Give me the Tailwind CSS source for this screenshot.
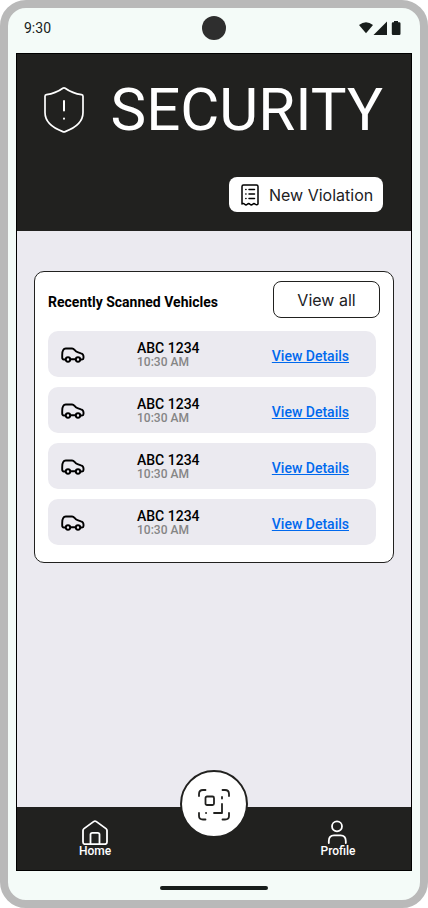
<!DOCTYPE html>
<html lang="en">
<head>
<meta charset="utf-8">
<meta name="viewport" content="width=device-width, initial-scale=1">
<title>Security</title>
<script src="https://cdn.jsdelivr.net/npm/@tailwindcss/browser@4"></script>
</head>
<body class="bg-white font-[Roboto,sans-serif] text-black">
<svg class="hidden" aria-hidden="true">
  <symbol id="car" viewBox="0 0 24 16">
    <g fill="none" stroke="#000" stroke-width="1.900" stroke-linejoin="round" stroke-linecap="round">
      <path d="M4 12.500H2.800Q1.200 12.500 1.200 10.500V8Q1.200 4.500 2.200 3Q3 1.500 4.800 1.500H11Q12.500 1.500 13.500 2.800Q14.700 4.600 16.500 5.200L20 6.300Q22.500 7 22.500 9.500V11Q22.500 12.500 21 12.500H19.500M9.500 12.300H14.500"/>
      <circle cx="7" cy="12.500" r="2.200"/><circle cx="17" cy="12.500" r="2.200"/>
    </g>
  </symbol>
</svg>
<div class="flex min-h-screen flex-col rounded-[26px] border-8 border-[#b9b9b9] bg-[#f4fbf8] px-2">
  <header class="relative flex h-[45px] items-center justify-between px-2 pb-[6px]">
    <time class="text-sm text-[#171d1b]">9:30</time>
    <span class="absolute top-2 left-1/2 size-6 -translate-x-1/2 rounded-full bg-[#2e2e2e]"></span>
    <svg class="mr-[2px] h-4 w-11" viewBox="0 0 44 16" fill="#171d1b" aria-label="Wi-Fi, signal and battery">
      <path d="M1 5Q8 -0.500 15 5L8 13.300Z"/>
      <path d="M15.500 15L29 1.500V15Z"/>
      <path d="M36 2.300V1H40V2.300H41.300Q42.500 2.300 42.500 3.500V13.800Q42.500 15 41.300 15H35Q33.800 15 33.800 13.800V3.500Q33.800 2.300 35 2.300Z"/>
    </svg>
  </header>
  <div class="flex grow flex-col border border-black bg-[#ebeaf0]">
    <section class="flex h-[177px] flex-col justify-between bg-[#21211f] px-7 pt-[26px] pb-[19px] pl-[27px]">
      <div class="flex items-center justify-between">
        <svg class="h-[46px] w-10" viewBox="0 0 40 46" fill="none" stroke="#fff" stroke-width="1.700" stroke-linejoin="round" stroke-linecap="round" aria-hidden="true">
          <path d="M18.800 1.300Q20 0.500 21.200 1.300Q28.500 6.600 37.500 7.600Q39 7.800 39 9.300V25.500Q39 38 21.200 44.600Q20 45.100 18.800 44.600Q1 38 1 25.500V9.300Q1 7.800 2.500 7.600Q11.500 6.600 18.800 1.300Z"/>
          <path d="M20 14V23.500M20 31.500V31.700" stroke-width="2"/>
        </svg>
        <h1 class="text-6xl leading-[60px] text-white">SECURITY</h1>
      </div>
      <button class="flex h-[35px] w-[154px] items-center gap-[10px] self-end rounded-lg bg-white pl-3 font-[Inter,sans-serif] text-base font-normal whitespace-nowrap text-[#21211f]">
        <svg class="h-[22px] w-[18px] shrink-0" viewBox="0 0 18 22" fill="none" stroke="#000" stroke-width="1.500" stroke-linejoin="round" stroke-linecap="round" aria-hidden="true">
          <path d="M1 20V2.500Q1 1 2.500 1H15.500Q17 1 17 2.500V20Q15.700 21.500 14.300 20.200Q13 19 11.700 20.200Q10.300 21.500 9 20.200Q7.700 19 6.300 20.200Q5 21.500 3.700 20.200Q2.300 19 1 20Z"/>
          <path d="M8 5.500H13.500M8 10H13.500M8 14.500H13.500M4.800 5.500H5M4.800 10H5M4.800 14.500H5"/>
        </svg>
        New Violation
      </button>
    </section>
    <main class="px-[17px] pt-10">
      <section class="rounded-[10px] border border-[#21211f] bg-white px-[13px] pt-[9px] pb-[17px]">
        <div class="flex items-center justify-between">
          <h2 class="pt-1 text-sm font-bold">Recently Scanned Vehicles</h2>
          <button class="h-[37px] w-[107px] rounded-lg border border-[#21211f] bg-white font-[Inter,sans-serif] text-base font-normal text-[#21211f]">View all</button>
        </div>
        <ul class="mt-[13px] mr-1 flex flex-col gap-[10px]">
          <li class="flex h-[46px] items-center rounded-[10px] bg-[#ebeaf0] pr-[27px] pl-[13px]">
            <svg class="mt-[2px] h-4 w-6" role="img" aria-label="Car"><use href="#car"/></svg>
            <div class="ml-[52px] grow"><p class="text-sm leading-4 font-medium">ABC 1234</p><p class="text-xs leading-3 font-medium text-[#858585]">10:30 AM</p></div>
            <a href="#v1" class="pt-1 text-sm font-medium text-[#0069ee] underline">View Details</a>
          </li>
          <li class="flex h-[46px] items-center rounded-[10px] bg-[#ebeaf0] pr-[27px] pl-[13px]">
            <svg class="mt-[2px] h-4 w-6" role="img" aria-label="Car"><use href="#car"/></svg>
            <div class="ml-[52px] grow"><p class="text-sm leading-4 font-medium">ABC 1234</p><p class="text-xs leading-3 font-medium text-[#858585]">10:30 AM</p></div>
            <a href="#v2" class="pt-1 text-sm font-medium text-[#0069ee] underline">View Details</a>
          </li>
          <li class="flex h-[46px] items-center rounded-[10px] bg-[#ebeaf0] pr-[27px] pl-[13px]">
            <svg class="mt-[2px] h-4 w-6" role="img" aria-label="Car"><use href="#car"/></svg>
            <div class="ml-[52px] grow"><p class="text-sm leading-4 font-medium">ABC 1234</p><p class="text-xs leading-3 font-medium text-[#858585]">10:30 AM</p></div>
            <a href="#v3" class="pt-1 text-sm font-medium text-[#0069ee] underline">View Details</a>
          </li>
          <li class="flex h-[46px] items-center rounded-[10px] bg-[#ebeaf0] pr-[27px] pl-[13px]">
            <svg class="mt-[2px] h-4 w-6" role="img" aria-label="Car"><use href="#car"/></svg>
            <div class="ml-[52px] grow"><p class="text-sm leading-4 font-medium">ABC 1234</p><p class="text-xs leading-3 font-medium text-[#858585]">10:30 AM</p></div>
            <a href="#v4" class="pt-1 text-sm font-medium text-[#0069ee] underline">View Details</a>
          </li>
        </ul>
      </section>
    </main>
    <nav class="relative mt-auto flex h-[63px] items-start justify-between bg-[#21211f] pt-[13px] pr-[51px] pl-14 text-xs leading-3 font-medium text-white">
      <a href="#home" class="flex w-11 flex-col items-center">
        <svg class="h-[25px] w-[26px]" viewBox="0 0 26 26" preserveAspectRatio="none" fill="none" stroke="#fff" stroke-width="1.800" stroke-linejoin="round" aria-hidden="true">
          <path d="M1 11Q1 9.800 2 9L11.600 1.700Q13 0.600 14.400 1.700L24 9Q25 9.800 25 11V23Q25 25.200 22.800 25.200H3.200Q1 25.200 1 23Z"/>
          <path d="M8.500 25V15.200Q8.500 13.300 10.400 13.300H15.600Q17.500 13.300 17.500 15.200V25"/>
        </svg>
        Home
      </a>
      <button aria-label="Scan code" class="absolute -top-[37px] left-1/2 flex size-[68px] -translate-x-1/2 items-center justify-center rounded-full border-2 border-[#21211f] bg-white">
        <svg class="mt-[2px] size-8" viewBox="0 0 32 32" fill="none" stroke="#21211f" stroke-width="1.800" stroke-linejoin="round" stroke-linecap="round" aria-hidden="true">
          <path d="M1 7V5Q1 1 5 1H7.500M24.500 1H27Q31 1 31 5V7M31 24V27Q31 30.500 27 30.500H24.500M7.500 30.500H5Q1 30.500 1 27V24"/>
          <rect x="7.500" y="7.500" width="8.500" height="8.500" rx="1.500"/>
          <path d="M24 8V9.500M24 15V24H16M8 24H8.100"/>
        </svg>
      </button>
      <a href="#profile" class="flex w-11 flex-col items-center">
        <svg class="h-[25px] w-[26px]" viewBox="0 0 26 25" fill="none" stroke="#fff" stroke-width="1.800" stroke-linecap="round" aria-hidden="true">
          <circle cx="12" cy="6.300" r="5"/>
          <path d="M3.800 23V21Q3.800 15.300 9 15.300H15.500Q20.800 15.300 20.800 21V23"/>
        </svg>
        Profile
      </a>
    </nav>
  </div>
  <footer class="flex h-[29px] items-center justify-center pt-1"><span class="h-1 w-27 rounded-full bg-[#171d1b]"></span></footer>
</div>
</body>
</html>
